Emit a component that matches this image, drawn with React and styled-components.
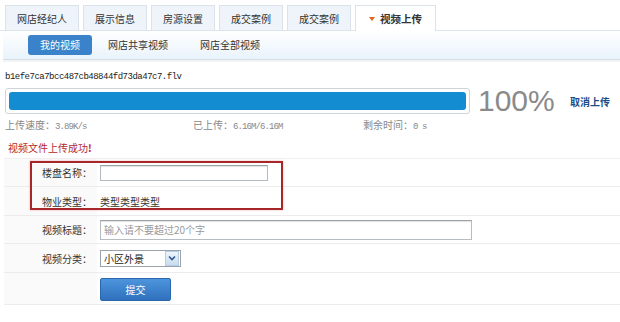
import React from 'react'
import styled, { createGlobalStyle } from 'styled-components'

const GlobalStyle = createGlobalStyle`
  body {
    margin: 0;
    background: #fff;
    font-family: "Noto Sans CJK SC", "Liberation Sans", sans-serif;
    font-size: 10px;
    color: #333;
  }
`

const tabs = ['网店经纪人', '展示信息', '房源设置', '成交案例', '成交案例']
const subTabs = ['我的视频', '网店共享视频', '网店全部视频']

function App() {
    return (
        <Page>
            <GlobalStyle />
            <TabBar>
                {tabs.map((t, i) => (
                    <Tab key={i}>{t}</Tab>
                ))}
                <Tab $active>
                    <Caret />
                    视频上传
                </Tab>
            </TabBar>
            <SubBar>
                {subTabs.map((t, i) => (
                    <SubTab key={t} $active={i === 0}>{t}</SubTab>
                ))}
            </SubBar>

            <Upload>
                <FileName>b1efe7ca7bcc487cb48844fd73da47c7.flv</FileName>
                <ProgressRow>
                    <Track>
                        <Fill style={{ width: '100%' }} />
                    </Track>
                    <Percent>100%</Percent>
                    <Cancel>取消上传</Cancel>
                </ProgressRow>
                <Stats>
                    <Stat $w={188}>上传速度：<Num>3.89K/s</Num></Stat>
                    <Stat $w={170}>已上传：<Num>6.16M/6.16M</Num></Stat>
                    <Stat>剩余时间：<Num>0 s</Num></Stat>
                </Stats>
                <Success>视频文件上传成功<Bang>!</Bang></Success>
            </Upload>

            <Form>
                <Row $h={28}>
                    <Label>楼盘名称：</Label>
                    <Field><TextInput $w={168} $h={16} /></Field>
                </Row>
                <Row $h={29}>
                    <Label>物业类型：</Label>
                    <Field>类型类型类型</Field>
                </Row>
                <Row $h={28}>
                    <Label>视频标题：</Label>
                    <Field><TextInput $w={372} $h={20} placeholder="输入请不要超过20个字" /></Field>
                </Row>
                <Row $h={29}>
                    <Label>视频分类：</Label>
                    <Field>
                        <Select>
                            <span>小区外景</span>
                            <SelectArrow>
                                <svg width="8" height="6" viewBox="0 0 8 6">
                                    <path d="M1 1.5 L4 4.5 L7 1.5" fill="none" stroke="#2d5a8c" strokeWidth="1.6" />
                                </svg>
                            </SelectArrow>
                        </Select>
                    </Field>
                </Row>
                <Row $h={32}>
                    <Label />
                    <Field><Submit>提交</Submit></Field>
                </Row>
                <Highlight />
            </Form>
        </Page>
    )
}

export default App

const Page = styled.div`
    width: 620px;
    padding-top: 5px;
`

const TabBar = styled.div`
    display: flex;
    gap: 4px;
    padding-left: 5px;
    height: 25px;
    border-bottom: 1px solid #dce4ec;
    align-items: flex-end;
`

const Tab = styled.div`
    display: flex;
    align-items: center;
    justify-content: center;
    padding: 0 ${p => (p.$active ? '13px' : '11px')};
    height: ${p => (p.$active ? '25px' : '24px')};
    margin-bottom: ${p => (p.$active ? '-1px' : '0')};
    border: 1px solid #dae2ea;
    border-bottom: none;
    background: ${p => (p.$active ? '#fff' : '#eef4f9')};
    color: #333;
    font-weight: ${p => (p.$active ? 700 : 400)};
    font-size: ${p => (p.$active ? '10.5px' : '10px')};
    white-space: nowrap;
`

const Caret = styled.span`
    width: 0;
    height: 0;
    border-left: 3px solid transparent;
    border-right: 3px solid transparent;
    border-top: 4px solid #e0661a;
    margin-right: 5px;
`

const SubBar = styled.div`
    display: flex;
    align-items: center;
    margin-left: 3px;
    height: 28px;
    padding-left: 25px;
    background: linear-gradient(#ffffff, #e9f3fb);
    border-bottom: 1px solid #d5dce3;
    box-shadow: 0 2px 0 #f2f4f6;
`

const SubTab = styled.div`
    height: 20px;
    line-height: 20px;
    padding: ${p => (p.$active ? '0 12px' : '0 16px')};
    border-radius: 3px;
    background: ${p => (p.$active ? '#3a83ca' : 'transparent')};
    color: ${p => (p.$active ? '#fff' : '#333')};
    font-size: 10px;
`

const Upload = styled.div`
    padding: 11px 0 0 5px;
`

const FileName = styled.div`
    font-family: "Liberation Mono", monospace;
    font-size: 9px;
    letter-spacing: -0.5px;
    color: #222;
    height: 12px;
    line-height: 12px;
`

const ProgressRow = styled.div`
    display: flex;
    align-items: center;
    margin-top: 5px;
    height: 26px;
`

const Track = styled.div`
    width: 457px;
    height: 18px;
    padding: 3px;
    border: 1px solid #cfd4d8;
    border-radius: 3px;
    background: #fff;
`

const Fill = styled.div`
    height: 100%;
    border-radius: 3px;
    background: #138cd1;
`

const Percent = styled.div`
    margin-left: 8px;
    font-family: "Liberation Sans", Arial, sans-serif;
    font-size: 30px;
    color: #8a8a8a;
    line-height: 30px;
    width: 92px;
`

const Cancel = styled.div`
    color: #1c4d86;
    font-size: 10px;
    font-weight: 700;
`

const Stats = styled.div`
    display: flex;
    margin-top: 4px;
    height: 14px;
    line-height: 14px;
    color: #888;
`

const Stat = styled.div`
    width: ${p => (p.$w ? `${p.$w}px` : 'auto')};
    font-size: 10px;
    white-space: nowrap;
`

const Num = styled.span`
    font-family: "Liberation Mono", monospace;
    font-size: 9px;
    letter-spacing: -0.9px;
`

const Success = styled.div`
    margin-top: 9px;
    margin-left: 3px;
    color: #b3282d;
    font-size: 10px;
    height: 13px;
    line-height: 13px;
`

const Bang = styled.span`
    font-weight: 700;
    color: #c8141e;
`

const Form = styled.div`
    position: relative;
    margin: 4px 0 0 4px;
    border-top: 1px solid #efefef;
`

const Row = styled.div`
    display: grid;
    grid-template-columns: 93px 1fr;
    height: ${p => p.$h - 1}px;
    border-bottom: 1px solid #ececec;
`

const Label = styled.div`
    display: flex;
    align-items: center;
    justify-content: flex-end;
    padding-right: 5px;
    background: #fafafa;
    font-size: 10px;
    color: #333;
`

const Field = styled.div`
    display: flex;
    align-items: center;
    padding-left: 3px;
    font-size: 10px;
    color: #333;
`

const TextInput = styled.input`
    box-sizing: border-box;
    width: ${p => p.$w}px;
    height: ${p => p.$h}px;
    margin: 0;
    padding: 0 3px;
    border: 1px solid #b5bcc2;
    border-top-color: #9aa1a7;
    box-shadow: inset 0 1px 1px #e2e2e2;
    font-family: "Noto Sans CJK SC", sans-serif;
    font-size: 10px;
    outline: none;
    &::placeholder {
        color: #999;
    }
`

const Select = styled.div`
    box-sizing: border-box;
    display: flex;
    align-items: center;
    justify-content: space-between;
    width: 81px;
    height: 17px;
    padding-left: 3px;
    border: 1px solid #9aa3ab;
    font-size: 10px;
    color: #222;
`

const SelectArrow = styled.div`
    display: flex;
    align-items: center;
    justify-content: center;
    width: 12px;
    height: 13px;
    margin-right: 1px;
    border: 1px solid #b8cde0;
    background: linear-gradient(#eef5fc, #c9dcee);
`

const Submit = styled.button`
    width: 71px;
    height: 23px;
    border: 1px solid #2a67ad;
    border-radius: 2px;
    background: linear-gradient(#4d95dd, #2f70bd);
    color: #fff;
    font-family: "Noto Sans CJK SC", sans-serif;
    font-size: 10px;
    margin-top: 2px;
`

const Highlight = styled.div`
    position: absolute;
    left: 26px;
    top: 2px;
    width: 249px;
    height: 45px;
    border: 2px solid #a6262a;
    box-shadow: 0 0 2px rgba(200, 40, 40, 0.35);
    pointer-events: none;
`
